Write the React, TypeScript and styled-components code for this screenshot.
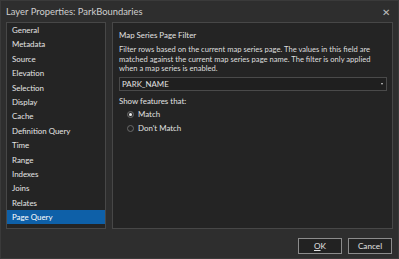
import styled, {createGlobalStyle} from 'styled-components';

const GlobalStyle = createGlobalStyle`
  html, body {
    margin: 0;
    padding: 0;
    background: #2d2d2d;
    overflow: hidden;
  }
`;

const Dialog = styled.div`
  width: 399px;
  height: 259px;
  box-sizing: border-box;
  background: #2e2e2e;
  border: 1px solid #3a3a3a;
  display: flex;
  flex-direction: column;
  font-family: 'Lato', 'Open Sans', sans-serif;
  color: #e2e2e2;
`;

const TitleBar = styled.div`
  height: 21px;
  display: flex;
  align-items: center;
  justify-content: space-between;
  padding: 0 6px 0 5px;
  font-size: 9.4px;
  color: #cfcfcf;
`;

const CloseButton = styled.span`
  font-size: 10px;
  color: #bdbdbd;
  width: 12px;
  text-align: center;
`;

const Body = styled.div`
  display: flex;
  gap: 6px;
  padding: 0 5px 0 5px;
  height: 207px;
`;

const Sidebar = styled.ul`
  width: 100px;
  flex-shrink: 0;
  margin: 0;
  padding: 0;
  list-style: none;
  background: #242424;
  border: 1px solid #474747;
  box-sizing: border-box;
`;

const NavItem = styled.li<{ $active?: boolean }>`
  height: 14.4px;
  line-height: 14.4px;
  padding-left: 5px;
  font-size: 7.9px;
  background: ${p => (p.$active ? '#0e60a8' : 'transparent')};
  color: ${p => (p.$active ? '#ffffff' : '#e4e4e4')};
  white-space: nowrap;
`;

const Content = styled.div`
  flex: 1;
  min-width: 0;
  background: #242424;
  border: 1px solid #474747;
  box-sizing: border-box;
  padding: 6px 7px 0 6px;
  font-size: 7.9px;
`;

const Heading = styled.div`
  line-height: 12px;
`;

const Description = styled.p`
  margin: 4px 0 0 0;
  line-height: 9.7px;
  font-size: 7.6px;
  color: #dedede;
  white-space: nowrap;
`;

const Select = styled.div`
  margin-top: 3px;
  height: 14px;
  box-sizing: border-box;
  border: 1px solid #4a4a4a;
  background: #1f1f1f;
  display: flex;
  align-items: center;
  justify-content: space-between;
  padding: 0 3px 0 2px;
  width: 268px;
`;

const Caret = styled.span`
  width: 0;
  height: 0;
  border-left: 1.5px solid transparent;
  border-right: 1.5px solid transparent;
  border-top: 2px solid #cfcfcf;
`;

const Label = styled.div`
  margin-top: 4px;
  line-height: 12px;
`;

const RadioRow = styled.label`
  display: flex;
  align-items: center;
  gap: 4px;
  height: 14px;
  padding-left: 8px;
`;

const RadioDot = styled.span<{ $checked?: boolean }>`
  width: 7px;
  height: 7px;
  border-radius: 50%;
  box-sizing: border-box;
  border: 1px solid #6a6a6a;
  background: ${p => (p.$checked ? '#2b2b2b' : 'transparent')};
  display: flex;
  align-items: center;
  justify-content: center;
  &::after {
    content: '';
    display: ${p => (p.$checked ? 'block' : 'none')};
    width: 3px;
    height: 3px;
    border-radius: 50%;
    background: #f0f0f0;
  }
`;

const Footer = styled.div`
  display: flex;
  justify-content: flex-end;
  gap: 6px;
  padding: 9px 6px 0 0;
`;

const Button = styled.button`
  width: 44px;
  height: 16px;
  box-sizing: border-box;
  border: 1px solid #8c8c8c;
  background: #222222;
  color: #e2e2e2;
  font-family: 'Lato', 'Open Sans', sans-serif;
  font-size: 8.2px;
  padding: 0;
`;

const navItems = [
    'General', 'Metadata', 'Source', 'Elevation', 'Selection', 'Display', 'Cache',
    'Definition Query', 'Time', 'Range', 'Indexes', 'Joins', 'Relates', 'Page Query',
];

const App = () => {
    return (
        <>
            <GlobalStyle/>
            <Dialog>
                <TitleBar>
                    <span>Layer Properties: ParkBoundaries</span>
                    <CloseButton>✕</CloseButton>
                </TitleBar>
                <Body>
                    <Sidebar>
                        {navItems.map(item =>
                            <NavItem key={item} $active={item === 'Page Query'}>{item}</NavItem>)}
                    </Sidebar>
                    <Content>
                        <Heading>Map Series Page Filter</Heading>
                        <Description>
                            Filter rows based on the current map series page. The values in this field are<br/>
                            matched against the current map series page name. The filter is only applied<br/>
                            when a map series is enabled.
                        </Description>
                        <Select>
                            <span>PARK_NAME</span>
                            <Caret/>
                        </Select>
                        <Label>Show features that:</Label>
                        <RadioRow><RadioDot $checked/>Match</RadioRow>
                        <RadioRow><RadioDot/>Don't Match</RadioRow>
                    </Content>
                </Body>
                <Footer>
                    <Button><u>O</u>K</Button>
                    <Button>Cancel</Button>
                </Footer>
            </Dialog>
        </>
    );
};

export default App;
